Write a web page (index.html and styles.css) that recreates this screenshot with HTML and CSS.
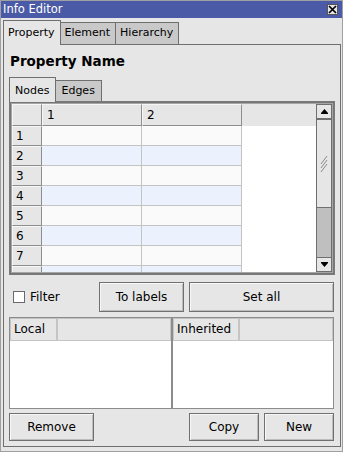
FILE: index.html
```html
<!DOCTYPE html>
<html lang="en">
<head>
  <meta charset="UTF-8" />
  <title>Info Editor</title>
  <link rel="stylesheet" href="styles.css">
</head>
<body>
  <div class="window">
    <div class="titlebar">
      <span>Info Editor</span>
      <div class="close">
        <svg width="9" height="9" viewBox="0 0 9 9"><path d="M1 1 L8 8 M8 1 L1 8" stroke="#000" stroke-width="1.7" fill="none"/></svg>
      </div>
    </div>

    <div class="body">
      <div class="tabs">
        <div class="tab active">Property</div>
        <div class="tab">Element</div>
        <div class="tab">Hierarchy</div>
      </div>

      <div class="panel">
        <h2 class="prop-name">Property Name</h2>

        <div class="tabs sub-tabs">
          <div class="tab active">Nodes</div>
          <div class="tab">Edges</div>
        </div>

        <div class="sub-panel">
          <div class="grid-frame">
            <div class="grid">
              <div class="grid-table">
                <div class="hd"></div><div class="hd">1</div><div class="hd">2</div><div class="hd-fill"></div>
                <div class="rh">1</div><div class="c"></div><div class="c"></div><div class="fill"></div>
                <div class="rh">2</div><div class="c alt"></div><div class="c alt"></div><div class="fill"></div>
                <div class="rh">3</div><div class="c"></div><div class="c"></div><div class="fill"></div>
                <div class="rh">4</div><div class="c alt"></div><div class="c alt"></div><div class="fill"></div>
                <div class="rh">5</div><div class="c"></div><div class="c"></div><div class="fill"></div>
                <div class="rh">6</div><div class="c alt"></div><div class="c alt"></div><div class="fill"></div>
                <div class="rh">7</div><div class="c"></div><div class="c"></div><div class="fill"></div>
                <div class="rh"></div><div class="c alt"></div><div class="c alt"></div><div class="fill"></div>
              </div>
              <div class="scrollbar">
                <div class="sb-btn">
                  <svg width="7" height="5" viewBox="0 0 7 5"><path d="M3.5 0 L7 4 L7 5 L0 5 L0 4 Z" fill="#000"/></svg>
                </div>
                <div class="sb-thumb">
                  <svg width="8" height="18" viewBox="0 0 8 18">
                    <path d="M1 9 L7 1 M1 13 L7 5 M1 17 L7 9" stroke="#8a8a8a" stroke-width="1" fill="none"/>
                  </svg>
                </div>
                <div class="sb-trough"></div>
                <div class="sb-btn">
                  <svg width="7" height="5" viewBox="0 0 7 5"><path d="M0 0 L7 0 L7 1 L3.5 5 L0 1 Z" fill="#000"/></svg>
                </div>
              </div>
            </div>
          </div>
        </div>

        <div class="filter-row">
          <label class="check"><span class="box"></span>Filter</label>
          <button class="btn btn-labels">To labels</button>
          <button class="btn btn-setall">Set all</button>
        </div>

        <div class="lists">
          <div class="list list-left">
            <div class="list-head">
              <div class="hc hc-local">Local</div>
              <div class="hc hc-rest"></div>
            </div>
          </div>
          <div class="list list-right">
            <div class="list-head">
              <div class="hc hc-inh">Inherited</div>
              <div class="hc hc-rest"></div>
            </div>
          </div>
        </div>

        <div class="actions">
          <button class="btn btn-remove">Remove</button>
          <button class="btn btn-small">Copy</button>
          <button class="btn btn-small">New</button>
        </div>
      </div>
    </div>
  </div>
</body>
</html>
```

FILE: styles.css
```css
* {
  box-sizing: border-box;
  margin: 0;
  padding: 0;
}

body {
  font-family: "DejaVu Sans", sans-serif;
  font-size: 12px;
  color: #000;
  background: #e6e6e6;
  width: 343px;
  height: 452px;
  overflow: hidden;
}

.window {
  height: 452px;
  border: 1px solid #a0a0a0;
  display: flex;
  flex-direction: column;
}

.titlebar {
  height: 17px;
  background: #4b5aa6;
  color: #fff;
  font-size: 11.5px;
  display: flex;
  align-items: center;
  justify-content: space-between;
  padding: 0 4px 0 2px;
  line-height: 17px;
}

.close {
  width: 11px;
  height: 11px;
  background: #e6e6e6;
  border: 1px solid #555;
  display: flex;
  align-items: center;
  justify-content: center;
}

.body {
  flex: 1;
  padding: 2px 1px 4px 2px;
  display: flex;
  flex-direction: column;
}

.tabs {
  display: flex;
  align-items: flex-end;
}

.tab {
  font-size: 11px;
  border: 1px solid #6f6f6f;
  border-bottom: none;
  background: #c9c9c9;
  padding: 2px 5px 3px 4px;
  line-height: 16px;
  margin-right: -1px;
}

.tab.active {
  background: #e6e6e6;
  padding: 4px 5px 4px 4px;
  position: relative;
  z-index: 1;
  margin-bottom: -1px;
}

.panel {
  flex: 1;
  border: 1px solid #6f6f6f;
  padding: 0 5px 5px;
  display: flex;
  flex-direction: column;
}

.prop-name {
  font-size: 13.5px;
  font-weight: bold;
  line-height: 16px;
  margin: 8px 0 8px 1px;
}

.sub-tabs .tab {
  padding: 2px 6px 2px 5px;
}

.sub-tabs .tab.active {
  padding: 5px 6px 3px 5px;
}

.sub-panel {
  border: 1px solid #7a7a7a;
  height: 174px;
}

.grid-frame {
  height: 100%;
  border: 1px solid #777;
}

.grid {
  height: 100%;
  border: 1px solid #a5a5a5;
  display: flex;
}

.grid-table {
  flex: 1;
  display: grid;
  grid-template-columns: 30px 100px 100px 1fr;
  grid-template-rows: 22px;
  grid-auto-rows: 20px;
  overflow: hidden;
  background: #fff;
}

.hd {
  background: #e6e6e6;
  border: 1px solid;
  border-color: #f6f6f6 #8e8e8e #8e8e8e #f6f6f6;
  padding-left: 4px;
  line-height: 20px;
}

.hd-fill {
  background: #e6e6e6;
}

.rh {
  background: #e6e6e6;
  border: 1px solid;
  border-color: #f6f6f6 #8e8e8e #8e8e8e #f6f6f6;
  padding-left: 3px;
  line-height: 18px;
}

.c {
  background: #fafafa;
  border-right: 1px solid #c3c3c3;
  border-bottom: 1px solid #c3c3c3;
}

.c.alt {
  background: #ebf2fd;
}

.fill {
  background: #fff;
}

.scrollbar {
  width: 16px;
  display: flex;
  flex-direction: column;
}

.sb-btn {
  height: 15px;
  background: #e6e6e6;
  border: 1px solid #6f6f6f;
  display: flex;
  align-items: center;
  justify-content: center;
}

.sb-thumb {
  height: 89px;
  background: #e6e6e6;
  border: 1px solid #6f6f6f;
  display: flex;
  align-items: center;
  justify-content: center;
}

.sb-trough {
  flex: 1;
  background: #bfbfbf;
  border-left: 1px solid #6f6f6f;
  border-right: 1px solid #6f6f6f;
}

.filter-row {
  display: flex;
  align-items: center;
  gap: 5px;
  height: 30px;
  margin: 7px 1px 0 0;
}

.check {
  flex: 1;
  display: flex;
  align-items: center;
  gap: 5px;
  padding-left: 4px;
}

.box {
  width: 12px;
  height: 12px;
  background: #fff;
  border: 1px solid #6a6a6a;
}

.btn {
  font: inherit;
  color: #000;
  background: #e6e6e6;
  border: 1px solid #707070;
  box-shadow: inset 1px 1px 0 #f8f8f8, inset -1px -1px 0 #bcbcbc;
}

.filter-row .btn {
  height: 30px;
}

.btn-labels {
  width: 85px;
}

.btn-setall {
  width: 145px;
}

.lists {
  display: flex;
  height: 92px;
  margin: 5px 1px 0 0;
}

.list {
  border: 1px solid #8c8c8c;
  background: #fff;
}

.list-left {
  width: 163px;
}

.list-right {
  flex: 1;
}

.list-head {
  display: flex;
  height: 23px;
  background: #e6e6e6;
}

.hc {
  border: 1px solid #c4c4c4;
  padding-left: 3px;
  line-height: 21px;
}

.hc-local {
  width: 47px;
}

.hc-inh {
  width: 66px;
}

.hc-rest {
  flex: 1;
}

.actions {
  display: flex;
  gap: 5px;
  height: 28px;
  margin: 4px 1px 0 0;
}

.btn-remove {
  width: 85px;
  margin-right: auto;
}

.btn-small {
  width: 70px;
}
```
